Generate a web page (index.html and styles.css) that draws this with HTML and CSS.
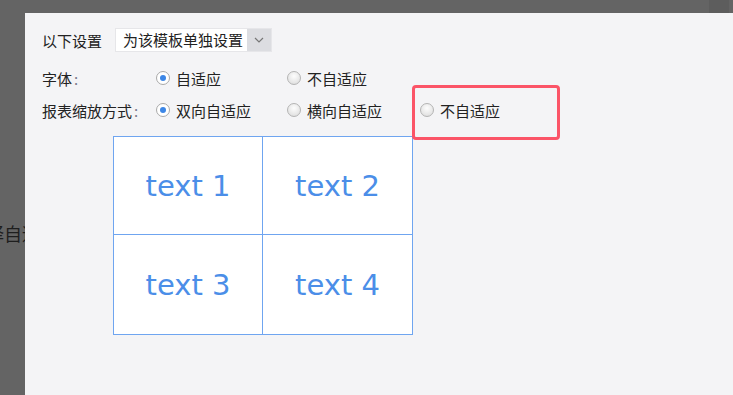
FILE: index.html
```html
<!DOCTYPE html>
<html lang="zh-CN">
  <head>
    <meta charset="UTF-8" />
    <meta name="viewport" content="width=device-width, initial-scale=1.0" />
    <title>模板自适应设置</title>
    <link rel="stylesheet" href="styles.css">
  </head>
  <body>
    <!-- text of the window behind the dialog -->
    <div class="behind-text">选择自适应</div>
    <div class="top-strip"></div>

    <div class="panel">
      <div class="setting-row">
        <span class="label-short">以下设置</span>
        <div class="select">
          <span class="select-value">为该模板单独设置</span>
          <span class="select-arrow">
            <svg width="10" height="6" viewBox="0 0 10 6">
              <path d="M1 1 L5 5 L9 1" fill="none" stroke="#777" stroke-width="1.2" />
            </svg>
          </span>
        </div>
      </div>

      <div class="option-row">
        <span class="label">字体<span class="colon">:</span></span>
        <label class="option first">
          <span class="radio checked"></span>自适应
        </label>
        <label class="option second">
          <span class="radio"></span>不自适应
        </label>
      </div>

      <div class="option-row">
        <span class="label">报表缩放方式<span class="colon">:</span></span>
        <label class="option first">
          <span class="radio checked"></span>双向自适应
        </label>
        <label class="option second">
          <span class="radio"></span>横向自适应
        </label>
        <label class="option third">
          <span class="radio"></span>不自适应
          <span class="highlight"></span>
        </label>
      </div>

      <div class="preview">
        <div class="cell">text 1</div>
        <div class="cell">text 2</div>
        <div class="cell">text 3</div>
        <div class="cell">text 4</div>
      </div>
    </div>
  </body>
</html>
```

FILE: styles.css
```css
* {
  box-sizing: border-box;
  margin: 0;
  padding: 0;
}

body {
  width: 733px;
  height: 395px;
  overflow: hidden;
  background: #646464;
  font-family: "Noto Sans CJK SC", "Noto Sans", sans-serif;
  font-size: 15px;
  color: #222;
  position: relative;
}

.behind-text {
  position: absolute;
  left: -32px;
  top: 221px;
  font-size: 18px;
  line-height: 24px;
  color: #1e1e1e;
}

.top-strip {
  position: absolute;
  left: 709px;
  top: 0;
  width: 20px;
  height: 13px;
  background: #5d5d5d;
}

.panel {
  position: relative;
  margin: 13px 0 0 25px;
  height: 382px;
  background: #f4f4f6;
  padding: 15px 0 0 17px;
}

.setting-row {
  display: flex;
  align-items: center;
  height: 24px;
  margin-bottom: 10px;
}

.label-short {
  width: 73px;
}

.select {
  display: flex;
  width: 157px;
  height: 24px;
  background: #fff;
  border: 1px solid #e6e6e9;
}

.select-value {
  flex: 1;
  padding-left: 7px;
  line-height: 22px;
  white-space: nowrap;
}

.select-arrow {
  width: 24px;
  display: flex;
  align-items: center;
  justify-content: center;
  background: #dcdde1;
}

.option-row {
  display: flex;
  align-items: center;
  height: 32px;
}

.label {
  width: 114px;
  white-space: nowrap;
}

.colon {
  color: #7a7a8c;
  margin-left: 2px;
}

.option {
  display: flex;
  align-items: center;
  position: relative;
  white-space: nowrap;
}

.option.first {
  width: 131px;
}

.option.second {
  width: 133px;
}

.radio {
  width: 14px;
  height: 14px;
  border-radius: 50%;
  border: 1px solid #b4b4b4;
  background: radial-gradient(circle at 50% 35%, #fdfdfd 0%, #e4e4e4 70%, #d4d4d4 100%);
  margin-right: 6px;
  position: relative;
}

.radio.checked {
  background: #fff;
  border-color: #a9a9a9;
}

.radio.checked::after {
  content: "";
  position: absolute;
  left: 3px;
  top: 3px;
  width: 6px;
  height: 6px;
  border-radius: 50%;
  background: #3c86e6;
}

.highlight {
  position: absolute;
  left: -8px;
  top: -15px;
  width: 148px;
  height: 55px;
  border: 3px solid #fb5467;
  border-radius: 4px;
}

.preview {
  display: grid;
  grid-template-columns: 149px 150px;
  grid-template-rows: 98px 100px;
  width: 300px;
  margin: 10px 0 0 71px;
  border-top: 1px solid #6fa5f0;
  border-left: 1px solid #6fa5f0;
}

.cell {
  display: flex;
  align-items: center;
  justify-content: center;
  background: #fff;
  border-right: 1px solid #6fa5f0;
  border-bottom: 1px solid #6fa5f0;
  font-family: "DejaVu Sans", sans-serif;
  font-size: 29px;
  color: #4b8ee8;
}
```
